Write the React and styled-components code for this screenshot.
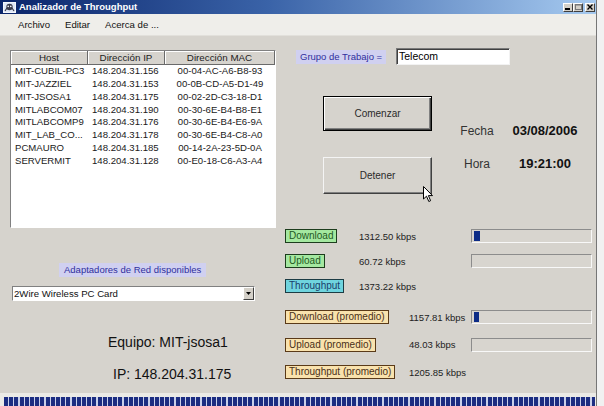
import React from "react";
import styled, { createGlobalStyle } from "styled-components";

const GlobalStyle = createGlobalStyle`
  html, body {
    margin: 0;
    padding: 0;
    background: #f1f1f1;
  }
  body {
    font-family: "Liberation Sans", Arial, sans-serif;
  }
  * {
    box-sizing: border-box;
  }
`;

const Window = styled.div`
  width: 597px;
  height: 406px;
  display: flex;
  flex-direction: column;
  background: #d6d3cd;
  border-right: 1px solid #767676;
  overflow: hidden;
`;

const TitleBar = styled.div`
  height: 14px;
  display: flex;
  align-items: center;
  padding: 0 1px 0 3px;
  background: linear-gradient(90deg, #0a246a 0%, #3a63a8 45%, #a6caf0 100%);
`;

const TitleText = styled.span`
  margin-left: 3px;
  color: #fff;
  font-size: 9.5px;
  font-weight: bold;
  line-height: 14px;
`;

const TitleButtons = styled.div`
  margin-left: auto;
  display: flex;
  gap: 0;
`;

const TitleButton = styled.div`
  width: 10px;
  height: 9px;
  margin-left: ${(p) => (p.$gap ? "2px" : "0")};
  background: #d4d0c8;
  border: 1px solid;
  border-color: #fff #404040 #404040 #fff;
  display: flex;
  align-items: center;
  justify-content: center;
  font-size: 8px;
  line-height: 7px;
  color: #000;
  font-weight: bold;
`;

const MenuBar = styled.div`
  height: 22px;
  display: flex;
  align-items: center;
  gap: 15px;
  padding-left: 18px;
  background: #efeeea;
  border-bottom: 1px solid #e2e0db;
`;

const MenuItem = styled.span`
  font-size: 9.6px;
  color: #111;
`;

const Body = styled.div`
  flex: 1;
  display: flex;
  padding-top: 12px;
`;

const LeftColumn = styled.div`
  width: 285px;
  padding: 2px 0 0 10px;
  display: flex;
  flex-direction: column;
`;

const RightColumn = styled.div`
  flex: 1;
  display: flex;
  flex-direction: column;
`;

const ListBox = styled.div`
  width: 266px;
  height: 178px;
  background: #fff;
  border: 1px solid;
  border-color: #808080 #fff #fff #808080;
`;

const ListGrid = styled.div`
  display: grid;
  grid-template-columns: 77px 77px 1fr;
`;

const HeaderCell = styled.div`
  height: 14px;
  background: #d6d3cd;
  border-right: 1px solid #6a6a6a;
  border-bottom: 1px solid #6a6a6a;
  box-shadow: inset 1px 1px 0 #fff;
  font-size: 9.8px;
  line-height: 13px;
  text-align: center;
  color: #222;
`;

const Cell = styled.div`
  height: 12.85px;
  font-size: 9.6px;
  line-height: 12.85px;
  color: #1a1a1a;
  white-space: nowrap;
  padding-left: ${(p) => (p.$center ? "0" : "4px")};
  text-align: ${(p) => (p.$center ? "center" : "left")};
`;

const BlueLabel = styled.span`
  display: inline-block;
  background: #d0d0f0;
  color: #2f2f9e;
  font-size: 9.5px;
  line-height: 14px;
  padding: 0 5px;
`;

const AdapterLabel = styled(BlueLabel)`
  align-self: flex-start;
  margin: 35px 0 0 49px;
`;

const Select = styled.div`
  width: 243px;
  height: 15px;
  margin: 9px 0 0 2px;
  background: #fff;
  border: 1px solid;
  border-color: #808080 #fff #fff #808080;
  display: flex;
  align-items: center;
  font-size: 9.6px;
  color: #111;
  padding-left: 1px;
`;

const SelectArrow = styled.div`
  margin-left: auto;
  width: 11px;
  height: 13px;
  background: #d4d0c8;
  border: 1px solid;
  border-color: #fff #404040 #404040 #fff;
  display: flex;
  align-items: center;
  justify-content: center;
`;

const InfoText = styled.div`
  font-size: 14px;
  line-height: 16px;
  color: #111;
  padding-left: ${(p) => p.$indent}px;
  margin-top: ${(p) => p.$top}px;
`;

const GroupRow = styled.div`
  display: flex;
  align-items: center;
  height: 17px;
  margin-left: 11px;
`;

const GroupLabel = styled(BlueLabel)`
  width: 90px;
  padding: 0 4px;
  white-space: nowrap;
`;

const TextBox = styled.div`
  width: 114px;
  height: 17px;
  margin-left: 10px;
  background: #fff;
  border: 1px solid;
  border-color: #7a7a7a #f2f2f2 #f2f2f2 #7a7a7a;
  box-shadow: inset 1px 1px 0 #404040;
  font-size: 10.5px;
  line-height: 15px;
  padding-left: 2px;
  color: #000;
`;

const ControlArea = styled.div`
  display: flex;
  margin: 31px 0 0 38px;
`;

const ButtonColumn = styled.div`
  display: flex;
  flex-direction: column;
  gap: 26px;
`;

const ButtonWrap = styled.div`
  position: relative;
`;

const Button = styled.div`
  width: 109px;
  height: ${(p) => p.$h}px;
  display: flex;
  align-items: center;
  justify-content: center;
  font-size: 10px;
  color: #2a2a2a;
  background: #d6d3cd;
  border: 1px solid;
  border-color: ${(p) =>
    p.$focused ? "#000" : "#f4f4f4 #404040 #404040 #f4f4f4"};
  box-shadow: ${(p) =>
    p.$focused
      ? "inset 1px 1px 0 #fff, inset -1px -1px 0 #404040, inset -2px -2px 0 #808080"
      : "inset -1px -1px 0 #808080"};
`;

const Cursor = styled.svg`
  position: absolute;
  left: 100px;
  top: 29px;
`;

const DateGrid = styled.div`
  display: grid;
  grid-template-columns: 34px 66px;
  column-gap: 18px;
  row-gap: 17px;
  margin: 27px 0 0 28px;
  align-self: flex-start;
`;

const DateLabel = styled.div`
  font-size: 12px;
  line-height: 16px;
  text-align: center;
  color: #333;
  white-space: nowrap;
`;

const DateValue = styled.div`
  font-size: 13px;
  line-height: 16px;
  font-weight: bold;
  text-align: center;
  color: #111;
  white-space: nowrap;
`;

const StatGroup = styled.div`
  display: flex;
  flex-direction: column;
  gap: ${(p) => p.$gap}px;
  margin-top: ${(p) => p.$top}px;
`;

const StatRow = styled.div`
  display: grid;
  grid-template-columns: ${(p) => p.$label}px ${(p) => p.$value}px 121px;
  align-items: center;
  height: 14px;
`;

const StatLabel = styled.span`
  justify-self: start;
  height: 14px;
  padding: 0 3px;
  border: 1px solid ${(p) => p.$border};
  background: ${(p) => p.$bg};
  color: ${(p) => p.$color};
  font-size: 10px;
  line-height: 12px;
  white-space: nowrap;
`;

const StatValue = styled.span`
  font-size: 9.5px;
  color: #222;
  white-space: nowrap;
`;

const Bar = styled.div`
  height: 14px;
  padding: 1px;
  background: #d8d5cf;
  border: 1px solid;
  border-color: #8c8c8c #f8f8f8 #f8f8f8 #8c8c8c;
`;

const BarFill = styled.div`
  height: 100%;
  background: #0c2b86;
  margin-left: 1px;
`;

const StatusBar = styled.div`
  height: 13px;
  border-top: 4px solid #ebeae6;
  background: #ebeae6;
  display: flex;
`;

const StatusStrip = styled.div`
  flex: 1;
  margin: 0 1px 0 4px;
  background: repeating-linear-gradient(
    90deg,
    #1c2d82 0 4px,
    #c9d0ea 4px 5.2px
  );
`;

const hosts = [
  ["MIT-CUBIL-PC3", "148.204.31.156", "00-04-AC-A6-B8-93"],
  ["MIT-JAZZIEL", "148.204.31.153", "00-0B-CD-A5-D1-49"],
  ["MIT-JSOSA1", "148.204.31.175", "00-02-2D-C3-18-D1"],
  ["MITLABCOM07", "148.204.31.190", "00-30-6E-B4-B8-E1"],
  ["MITLABCOMP9", "148.204.31.176", "00-30-6E-B4-E6-9A"],
  ["MIT_LAB_CO...", "148.204.31.178", "00-30-6E-B4-C8-A0"],
  ["PCMAURO", "148.204.31.185", "00-14-2A-23-5D-0A"],
  ["SERVERMIT", "148.204.31.128", "00-E0-18-C6-A3-A4"],
];

const green = { bg: "#a4e8a0", border: "#1d3d1d", color: "#1f5a1f" };
const cyan = { bg: "#6fd4de", border: "#1c3c44", color: "#1a3f6a" };
const tan = { bg: "#f9e2ad", border: "#5a3a18", color: "#4a3018" };

const current = [
  { name: "Download", kbps: 1312.5, bar: true, ...green },
  { name: "Upload", kbps: 60.72, bar: true, ...green },
  { name: "Throughput", kbps: 1373.22, bar: false, ...cyan },
];

const average = [
  { name: "Download (promedio)", kbps: 1157.81, bar: true, ...tan },
  { name: "Upload (promedio)", kbps: 48.03, bar: true, ...tan },
  { name: "Throughput (promedio)", kbps: 1205.85, bar: false, ...tan },
];

const MAX_KBPS = 25000;

const Stat = ({ s, label, value }) => (
  <StatRow $label={label} $value={value}>
    <StatLabel $bg={s.bg} $border={s.border} $color={s.color}>
      {s.name}
    </StatLabel>
    <StatValue>{s.kbps.toFixed(2)} kbps</StatValue>
    {s.bar ? (
      <Bar>
        <BarFill style={{ width: Math.floor((s.kbps / MAX_KBPS) * 117) }} />
      </Bar>
    ) : (
      <span />
    )}
  </StatRow>
);

const AppIcon = () => (
  <svg width="13" height="11" viewBox="0 0 13 11">
    <rect x="0.5" y="0.5" width="12" height="10" fill="#dfe7f6" stroke="#f4f6fb" />
    <circle cx="6.5" cy="5" r="3.2" fill="#3a3a4a" />
    <circle cx="5.2" cy="4.4" r="0.8" fill="#fff" />
    <circle cx="7.8" cy="4.4" r="0.8" fill="#fff" />
    <path d="M2 9 L4 6 M11 9 L9 6" stroke="#3a3a4a" strokeWidth="1.2" />
  </svg>
);

const App = () => {
  return (
    <>
      <GlobalStyle />
      <Window>
        <TitleBar>
          <AppIcon />
          <TitleText>Analizador de Throughput</TitleText>
          <TitleButtons>
            <TitleButton>
              <svg width="6" height="6" viewBox="0 0 6 6">
                <rect x="0" y="4" width="5" height="2" fill="#000" />
              </svg>
            </TitleButton>
            <TitleButton>
              <svg width="7" height="6" viewBox="0 0 7 6">
                <rect x="0.5" y="0.5" width="6" height="5" fill="none" stroke="#777" />
                <rect x="0" y="0" width="7" height="1.5" fill="#777" />
              </svg>
            </TitleButton>
            <TitleButton $gap>
              <svg width="6" height="6" viewBox="0 0 6 6">
                <path d="M0.5 0.5 L5.5 5.5 M5.5 0.5 L0.5 5.5" stroke="#000" strokeWidth="1.4" />
              </svg>
            </TitleButton>
          </TitleButtons>
        </TitleBar>

        <MenuBar>
          <MenuItem>Archivo</MenuItem>
          <MenuItem>Editar</MenuItem>
          <MenuItem>Acerca de ...</MenuItem>
        </MenuBar>

        <Body>
          <LeftColumn>
            <ListBox>
              <ListGrid>
                <HeaderCell>Host</HeaderCell>
                <HeaderCell>Dirección IP</HeaderCell>
                <HeaderCell>Dirección MAC</HeaderCell>
                {hosts.map(([h, ip, mac]) => (
                  <React.Fragment key={h}>
                    <Cell>{h}</Cell>
                    <Cell>{ip}</Cell>
                    <Cell $center>{mac}</Cell>
                  </React.Fragment>
                ))}
              </ListGrid>
            </ListBox>

            <AdapterLabel>Adaptadores de Red disponibles</AdapterLabel>
            <Select>
              2Wire Wireless PC Card
              <SelectArrow>
                <svg width="5" height="3" viewBox="0 0 5 3">
                  <path d="M0 0 H5 L2.5 3 Z" fill="#000" />
                </svg>
              </SelectArrow>
            </Select>

            <InfoText $indent={98} $top={33}>
              Equipo: MIT-jsosa1
            </InfoText>
            <InfoText $indent={103} $top={16}>
              IP: 148.204.31.175
            </InfoText>
          </LeftColumn>

          <RightColumn>
            <GroupRow>
              <GroupLabel>Grupo de Trabajo =</GroupLabel>
              <TextBox>Telecom</TextBox>
            </GroupRow>

            <ControlArea>
              <ButtonColumn>
                <Button $h={35} $focused>
                  Comenzar
                </Button>
                <ButtonWrap>
                  <Button $h={37}>Detener</Button>
                  <Cursor width="11" height="17" viewBox="0 0 11 17">
                    <path
                      d="M0.5 0.5 L0.5 13 L3.5 10.2 L5.8 15.5 L7.6 14.7 L5.4 9.6 L9.5 9.6 Z"
                      fill="#fff"
                      stroke="#000"
                      strokeWidth="1"
                    />
                  </Cursor>
                </ButtonWrap>
              </ButtonColumn>

              <DateGrid>
                <DateLabel>Fecha</DateLabel>
                <DateValue>03/08/2006</DateValue>
                <DateLabel>Hora</DateLabel>
                <DateValue>19:21:00</DateValue>
              </DateGrid>
            </ControlArea>

            <StatGroup $gap={11} $top={35}>
              {current.map((s) => (
                <Stat key={s.name} s={s} label={74} value={112} />
              ))}
            </StatGroup>

            <StatGroup $gap={13.5} $top={17}>
              {average.map((s) => (
                <Stat key={s.name} s={s} label={124} value={62} />
              ))}
            </StatGroup>
          </RightColumn>
        </Body>

        <StatusBar>
          <StatusStrip />
        </StatusBar>
      </Window>
    </>
  );
};

export default App;
